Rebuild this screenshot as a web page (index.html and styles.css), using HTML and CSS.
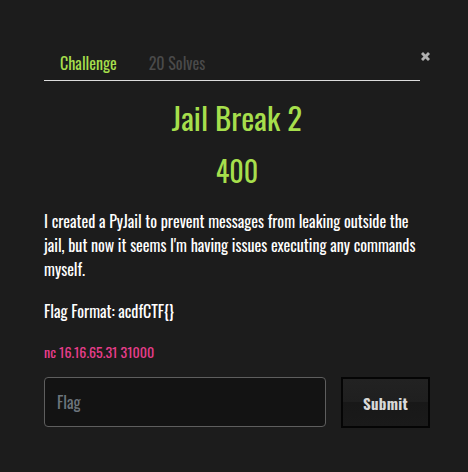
FILE: index.html
```html
<!DOCTYPE html>
<html>
<head>
<meta charset="utf-8">
<link rel="stylesheet" href="styles.css">
</head>
<body>
<div class="modal">
  <button class="close" aria-label="Close">
    <svg width="9" height="9" viewBox="0 0 9 9"><path d="M0 2 2 0 4.5 2.5 7 0 9 2 6.5 4.5 9 7 7 9 4.5 6.5 2 9 0 7 2.5 4.5Z" fill="#b0b0b0"/></svg>
  </button>
  <nav class="tabs">
    <span class="tab active">Challenge</span>
    <span class="tab">20 Solves</span>
  </nav>
  <h3 class="title">Jail Break 2</h3>
  <h4 class="points">400</h4>
  <p class="desc first">I created a PyJail to prevent messages from leaking outside the jail, but now it seems I'm having issues executing any commands myself.</p>
  <p class="desc">Flag Format: acdfCTF{}</p>
  <p class="desc conn-line"><code class="conn">nc 16.16.65.31 31000</code></p>
  <form class="submit-row">
    <input class="flag-input" type="text" placeholder="Flag">
    <button class="submit-btn" type="button">Submit</button>
  </form>
</div>
</body>
</html>
```
FILE: styles.css
```css
html, body {
  margin: 0;
  padding: 0;
  background: #1c1c1c;
}
body {
  width: 468px;
  height: 472px;
  font-family: "Oswald", "Roboto Condensed", "Open Sans Condensed", "DejaVu Sans Condensed", "DejaVu Sans", sans-serif;
  font-stretch: condensed;
  color: #ffffff;
}
.modal {
  position: relative;
  padding: 46px 38px 0 44px;
}
.close {
  position: absolute;
  top: 52px;
  left: 421px;
  width: 9px;
  height: 9px;
  padding: 0;
  border: 0;
  background: none;
  line-height: 0;
}
.tabs {
  display: flex;
  margin-right: 10px;
  border-bottom: 1px solid #dcdcdc;
  height: 35px;
  box-sizing: border-box;
}
.tab {
  padding: 6px 16px 0;
  font-size: 16px;
  line-height: 22px;
  color: #4a4a4a;
}
.tab.active {
  color: #a6df4c;
}
.title {
  margin: 16px 0 0;
  text-align: center;
  font-weight: normal;
  font-size: 31px;
  line-height: 40px;
  color: #a6df4c;
}
.points {
  margin: 16px 0 0;
  text-align: center;
  font-weight: normal;
  font-size: 28px;
  line-height: 36px;
  color: #a6df4c;
}
.desc {
  margin: 18px 0 0;
  font-size: 16px;
  line-height: 24px;
}
.desc.first {
  margin-top: 20px;
}
.desc.conn-line {
  margin-top: 16px;
}
.conn {
  font-family: inherit;
  font-size: 14px;
  color: #e83e8c;
}
.submit-row {
  display: flex;
  gap: 15px;
  margin-top: 13px;
}
.flag-input {
  width: 282px;
  height: 50px;
  box-sizing: border-box;
  padding: 0 12px;
  border: 1px solid #5e5e5e;
  border-radius: 4px;
  background: #131313;
  font-family: inherit;
  font-stretch: condensed;
  font-size: 16px;
  color: #fff;
  outline: none;
}
.flag-input::placeholder {
  color: #6c757d;
}
.submit-btn {
  width: 89px;
  height: 51px;
  box-sizing: border-box;
  border: 2px solid #050505;
  background: linear-gradient(#222 0, #1f1f1f 50%, #181818 50%, #1a1a1a 100%);
  font-family: inherit;
  font-stretch: condensed;
  font-weight: bold;
  font-size: 15px;
  letter-spacing: 0.3px;
  color: #d8d8d8;
}
```
